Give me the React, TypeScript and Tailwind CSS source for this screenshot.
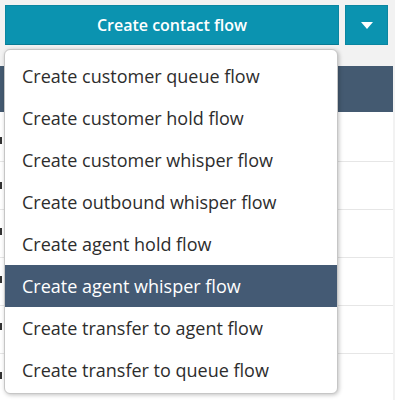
import React from 'react'

const items = [
  'Create customer queue flow',
  'Create customer hold flow',
  'Create customer whisper flow',
  'Create outbound whisper flow',
  'Create agent hold flow',
  'Create agent whisper flow',
  'Create transfer to agent flow',
  'Create transfer to queue flow',
]

const marks = [137, 182, 228, 276, 323, 372]

export default function App() {
  return (
    <div
      className="relative w-[395px] h-[400px] overflow-hidden bg-[#f2f2f2]"
      style={{ fontFamily: '"Open Sans", "Liberation Sans", sans-serif' }}
    >
      {/* top actions */}
      <div className="flex gap-[6px] pl-[5px] pt-[5px] h-[66px]">
        <button className="w-[334px] h-[40px] bg-[#0b93b0] border border-[#0a86a1] border-b-[#087a93] text-white text-[16px] font-semibold">
          Create contact flow
        </button>
        <button className="w-[43px] h-[40px] bg-[#0b93b0] border border-[#0a86a1] flex items-center justify-center">
          <svg width="12" height="7" viewBox="0 0 12 7">
            <path d="M0 0 L12 0 L6 7 Z" fill="#fff" />
          </svg>
        </button>
      </div>

      {/* table behind the menu */}
      <div className="w-[393px]">
        <div className="h-[46px] bg-[#445a71]" />
        <div className="bg-white">
          {[50, 48, 48, 48, 48, 48].map((h, i) => (
            <div key={i} className="border-b border-[#e6e6e6]" style={{ height: h }} />
          ))}
        </div>
      </div>

      {marks.map((y) => (
        <div key={y} className="absolute left-0 w-[2px] h-[7px] bg-[#333]" style={{ top: y }} />
      ))}

      {/* dropdown menu */}
      <div className="absolute left-[4px] top-[49px] w-[334px] h-[345px] bg-white rounded-[6px] border border-[#c6c6c6] shadow-[1px_1px_4px_rgba(0,0,0,0.25)] pt-[5px]">
        {items.map((t, i) => (
          <div
            key={t}
            className={
              i === 5
                ? 'h-[42px] flex items-center pl-[17px] bg-[#445a74] text-white text-[18px]'
                : 'h-[42px] flex items-center pl-[17px] text-[#2d2d2d] text-[18px]'
            }
          >
            {t}
          </div>
        ))}
      </div>
    </div>
  )
}
